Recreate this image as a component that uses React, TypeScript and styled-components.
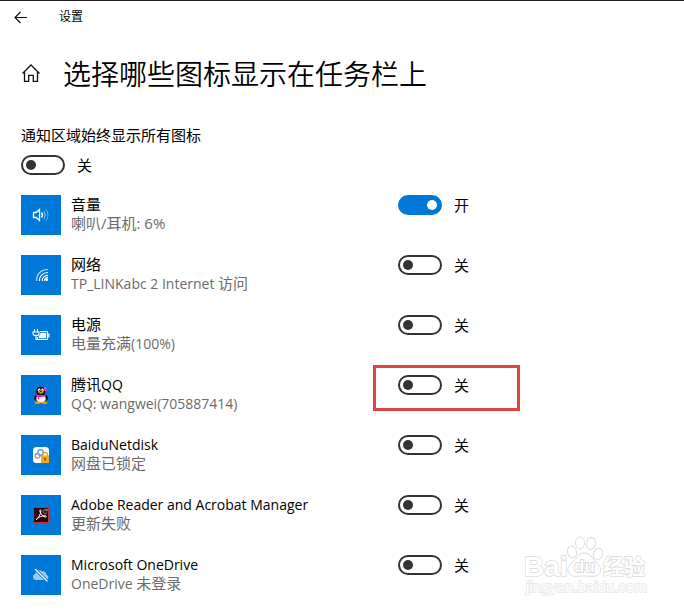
import React, { useState } from "react";
import styled, { createGlobalStyle } from "styled-components";

const GlobalStyle = createGlobalStyle`
  *, *::before, *::after { box-sizing: border-box; }
  body {
    margin: 0;
    background: #fff;
    color: #000;
    font-family: "Open Sans", "Noto Sans CJK SC", sans-serif;
    font-size: 15px;
    line-height: 20px;
  }
`;

const Page = styled.div`
  position: relative;
  min-height: 100vh;
  padding-bottom: 16px;
  border-top: 1px solid #252025;
  overflow: hidden;
`;

const TitleBar = styled.header`
  display: flex;
  align-items: center;
  gap: 32px;
  height: 32px;
  padding: 0 13px;
  font-size: 12px;
`;

const IconButton = styled.button`
  display: flex;
  padding: 0;
  border: 0;
  background: none;
  color: #111;
  cursor: pointer;
`;

const Heading = styled.div`
  display: flex;
  align-items: center;
  gap: 22px;
  padding: 20px 21px;
`;

const Title = styled.h1`
  margin: 0;
  font-family: "Noto Sans CJK SC", sans-serif;
  font-size: 28px;
  line-height: 40px;
  font-weight: 350;
`;

const Content = styled.main`
  padding: 12px 21px 0;
`;

const MasterSetting = styled.section`
  display: flex;
  flex-direction: column;
  gap: 10px;
  margin-bottom: 20px;
`;

const Toggle = styled.label`
  position: relative;
  display: flex;
  align-items: center;
  gap: 12px;
  height: 20px;
  width: max-content;
  cursor: pointer;
`;

const Switch = styled.input`
  appearance: none;
  display: flex;
  align-items: center;
  width: 44px;
  height: 20px;
  margin: 0;
  padding: 0 3px;
  border: 2px solid #333;
  border-radius: 10px;
  background: #fff;
  cursor: pointer;

  &::before {
    content: "";
    width: 10px;
    height: 10px;
    border-radius: 50%;
    background: #333;
  }

  &:checked {
    justify-content: flex-end;
    border-color: #0078d7;
    background: #0078d7;
  }

  &:checked::before { background: #fff; }
`;

const Highlight = styled.span`
  position: absolute;
  inset: -10px -51px -16px -25px;
  border: 3px solid #e04343;
  pointer-events: none;
`;

const List = styled.ul`
  display: flex;
  flex-direction: column;
  gap: 20px;
  margin: 0;
  padding: 0;
  list-style: none;
`;

const Row = styled.li`
  display: grid;
  grid-template-columns: 40px minmax(0, 317px) auto;
  justify-content: start;
  column-gap: 10px;
`;

const Tile = styled.div`
  display: grid;
  place-items: center;
  height: 40px;
  background: #0078d7;
`;

const Name = styled.div`
  line-height: 19px;
`;

const Detail = styled.div`
  line-height: 19px;
  color: #6b6b6b;
`;

const Latin = styled.span`
  font-size: 14px;
`;

const Watermark = styled.div`
  position: absolute;
  right: 36px;
  bottom: 14px;
  width: 124px;
  pointer-events: none;
  font-family: "Liberation Sans", "Noto Sans CJK SC", sans-serif;

  svg { display: block; width: 100%; }
  text { paint-order: stroke; stroke-width: 1.5px; }
`;

function BackIcon() {
  return (
    <svg width="14" height="14" viewBox="0 0 14 14" fill="none" stroke="currentColor" strokeWidth="1.2">
      <path d="M14 7.500H2M7.500 2 2 7.500l5.500 5.500" />
    </svg>
  );
}

function HomeIcon() {
  return (
    <svg width="20" height="20" viewBox="0 0 20 20" fill="none" stroke="#111" strokeWidth="1.3">
      <path d="M1.500 10.500 10 2l8.500 8.500M3.500 9v9.300h4.200v-6h4.600v6h4.200V9" />
    </svg>
  );
}

function VolumeIcon() {
  return (
    <svg width="18" height="16" viewBox="0 0 18 16" fill="none" stroke="#fff">
      <path d="M1.500 5.500h2.700L7.500 2.500v11l-3.300-3H1.500z" strokeWidth="1.3" />
      <path d="M9.500 5.500q2 2.500 0 5" strokeWidth="1.3" />
      <path d="M12 4.200q2.500 3.800 0 7.600" opacity=".6" />
      <path d="M14.200 2.500q3.500 5.500 0 11" opacity=".4" />
    </svg>
  );
}

function WifiIcon() {
  return (
    <svg width="16" height="16" viewBox="0 0 16 16" fill="none" stroke="#fff" strokeWidth="1.2">
      <path d="M3.500 14C3.500 7 8 2.500 15 2.500" opacity=".75" />
      <path d="M6.300 14C6.300 9 10 5.500 15 5.500" />
      <path d="M9.200 14c0-3.300 2.500-5.700 5.800-5.700" />
      <path d="M11.500 14c0-2 1.500-3.300 3.500-3.300" />
      <circle cx="13.800" cy="12.700" r="1.300" fill="#fff" stroke="none" />
    </svg>
  );
}

function PowerIcon() {
  return (
    <svg width="18" height="14" viewBox="0 0 18 14" fill="none" stroke="#fff">
      <path d="M2.500 1v2.500M5.500 1v2.500M1 4h6v1.500Q7 7.500 4 7.500T1 5.500zM4 7.500v4h1.500" strokeWidth="1.1" />
      <path d="M8 3.500h7.500v8h-10V9" />
      <path d="M8.500 5H14v5H7V8q1.500-1 1.500-3z" fill="#fff" strokeWidth=".5" />
      <path d="M16.800 5.500v4" strokeWidth="1.300" />
    </svg>
  );
}

function QQIcon() {
  return (
    <svg width="16" height="18" viewBox="0 0 16 18">
      <path d="M3.500 9Q.5 10 1 14l2-1.500M12.500 9q3 1 2.500 5l-2-1.500" fill="#111" />
      <ellipse cx="8" cy="11.500" rx="6" ry="5.500" fill="#111" />
      <ellipse cx="8" cy="12.700" rx="4.700" ry="4.100" fill="#fff" />
      <ellipse cx="7.800" cy="5" rx="4.600" ry="4.600" fill="#111" />
      <ellipse cx="6.200" cy="4.200" rx="1.300" ry="1.600" fill="#fff" />
      <ellipse cx="9.400" cy="4.200" rx="1.300" ry="1.600" fill="#fff" />
      <circle cx="6.600" cy="4.500" r=".6" fill="#111" />
      <circle cx="9" cy="4.500" r=".6" fill="#111" />
      <path d="M4.500 6.600q3.300-1.300 6.600 0Q8 8.700 4.500 6.600" fill="#f5a000" />
      <path d="M3 8q5 2.400 9.800 0l.5 1.700q-3.300 1.500-7 1.300l-.2 2.200-1.600-.3.200-2.200Q3.300 10.300 2.700 9.700z" fill="#f414b8" />
      <path d="m10.500 1 3.500 0-.7 2.200.9 1.800-3-.6z" fill="#e23bd0" />
      <ellipse cx="4.500" cy="16.700" rx="3" ry="1.200" fill="#f5a000" />
      <ellipse cx="11.500" cy="16.700" rx="3" ry="1.200" fill="#f5a000" />
    </svg>
  );
}

function NetdiskIcon() {
  return (
    <svg width="18" height="18" viewBox="0 0 18 18" fill="none">
      <rect x="1" y="1" width="16" height="16" rx="3.500" fill="#fff" />
      <circle cx="8.500" cy="6.500" r="2.700" stroke="#58aff2" strokeWidth="1.500" />
      <circle cx="5.500" cy="9.800" r="2.300" stroke="#f07a82" strokeWidth="1.400" />
      <path d="M3.500 8.500a2.500 2.500 0 0 1 4-.2l3 3.500" stroke="#59b5f8" strokeWidth="1.400" />
      <path d="M10.700 10V8.600a2.300 2.300 0 0 1 4.600 0V10" stroke="#d99a16" strokeWidth="1.300" />
      <path d="M9 9.500h8v7.500H9z" fill="#edab20" />
      <path d="M13 11.800v2.700" stroke="#70480b" strokeWidth="1.500" />
    </svg>
  );
}

function AcrobatIcon() {
  return (
    <svg width="18" height="18" viewBox="0 0 18 18" fill="none">
      <path d="M1.500 1.500h15v15h-15z" fill="#2b070c" stroke="#c72a35" />
      <path d="M4 13.700c1.500 0 5-5.500 4.800-9.200-.1-1-1.200-.8-1 .2.400 3 3.700 6.500 6 6.300 1-.2.500-1.300-.6-1.300-3 0-7.500 1.500-9.200 4" stroke="#fff" />
      <path d="M15 4.500a2 2 0 1 0 0 2M15.300 2.800v2h-2" stroke="#aaa" strokeWidth=".8" />
    </svg>
  );
}

function CloudOffIcon() {
  return (
    <svg width="18" height="16" viewBox="0 0 18 16" fill="none">
      <path d="M4 13a3 3 0 0 1-.8-5.900A4 4 0 0 1 10 4.500a3.500 3.500 0 0 1 4.500 3.300A2.700 2.700 0 0 1 14.500 13z" fill="#9ccaf0" />
      <path d="m3 2 12 12" stroke="#0078d7" strokeWidth="3" />
      <path d="m3 2 12.500 12.500" stroke="#fff" strokeWidth="1.300" />
    </svg>
  );
}

interface TrayItem {
  name: React.ReactNode;
  label: string;
  detail: React.ReactNode;
  icon: React.ReactNode;
  on?: boolean;
  marked?: boolean;
}

const items: TrayItem[] = [
  { label: "音量", name: "音量", detail: "喇叭/耳机: 6%", icon: <VolumeIcon />, on: true },
  { label: "网络", name: "网络", detail: <><Latin>TP_LINKabc 2 Internet </Latin>访问</>, icon: <WifiIcon /> },
  { label: "电源", name: "电源", detail: <>电量充满<Latin>(100%)</Latin></>, icon: <PowerIcon /> },
  { label: "腾讯QQ", name: <>腾讯<Latin>QQ</Latin></>, detail: <Latin>QQ: wangwei(705887414)</Latin>, icon: <QQIcon />, marked: true },
  { label: "BaiduNetdisk", name: <Latin>BaiduNetdisk</Latin>, detail: "网盘已锁定", icon: <NetdiskIcon /> },
  { label: "Adobe Reader", name: <Latin>Adobe Reader and Acrobat Manager</Latin>, detail: "更新失败", icon: <AcrobatIcon /> },
  { label: "OneDrive", name: <Latin>Microsoft OneDrive</Latin>, detail: <><Latin>OneDrive </Latin>未登录</>, icon: <CloudOffIcon /> },
];

function ToggleSwitch({ label, initial = false, marked = false }: { label: string; initial?: boolean; marked?: boolean }) {
  const [on, setOn] = useState(initial);
  return (
    <Toggle>
      <Switch type="checkbox" role="switch" aria-label={label} checked={on} onChange={(e) => setOn(e.target.checked)} />
      <span>{on ? "开" : "关"}</span>
      {marked && <Highlight />}
    </Toggle>
  );
}

function BaiduMark() {
  return (
    <Watermark>
      <svg viewBox="0 0 124 62" fill="#fff" stroke="#dcdcdc">
        <ellipse cx="48" cy="17" rx="4.500" ry="6" transform="rotate(-15 48 17)" />
        <ellipse cx="56" cy="8" rx="4.500" ry="6" />
        <ellipse cx="67" cy="8.500" rx="4.500" ry="6" transform="rotate(10 67 8.500)" />
        <ellipse cx="74" cy="19" rx="4.500" ry="6" transform="rotate(20 74 19)" />
        <path d="M60 18c6 0 8 5 12 9s6 7 4 11c-3 5-9 3-16 3s-12 2-15-3c-3-4 0-8 4-11s5-9 11-9z" />
        <text x="0" y="41" fontSize="28" fontWeight="700">Bai</text>
        <text x="50" y="37" fontSize="17" fontWeight="700" stroke="#cfcfcf">du</text>
        <text x="79" y="39" fontSize="21" fontWeight="700">经验</text>
        <text x="2" y="57" fontSize="15" stroke="#e6e6e6">jingyan.baidu.com</text>
      </svg>
    </Watermark>
  );
}

export default function App() {
  return (
    <>
      <GlobalStyle />
      <Page>
        <TitleBar>
          <IconButton type="button" aria-label="返回"><BackIcon /></IconButton>
          <span>设置</span>
        </TitleBar>
        <Heading>
          <IconButton type="button" aria-label="主页"><HomeIcon /></IconButton>
          <Title>选择哪些图标显示在任务栏上</Title>
        </Heading>
        <Content>
          <MasterSetting>
            <div>通知区域始终显示所有图标</div>
            <ToggleSwitch label="通知区域始终显示所有图标" />
          </MasterSetting>
          <List>
            {items.map((item) => (
              <Row key={item.label}>
                <Tile>{item.icon}</Tile>
                <div>
                  <Name>{item.name}</Name>
                  <Detail>{item.detail}</Detail>
                </div>
                <ToggleSwitch label={item.label} initial={item.on} marked={item.marked} />
              </Row>
            ))}
          </List>
        </Content>
        <BaiduMark />
      </Page>
    </>
  );
}
